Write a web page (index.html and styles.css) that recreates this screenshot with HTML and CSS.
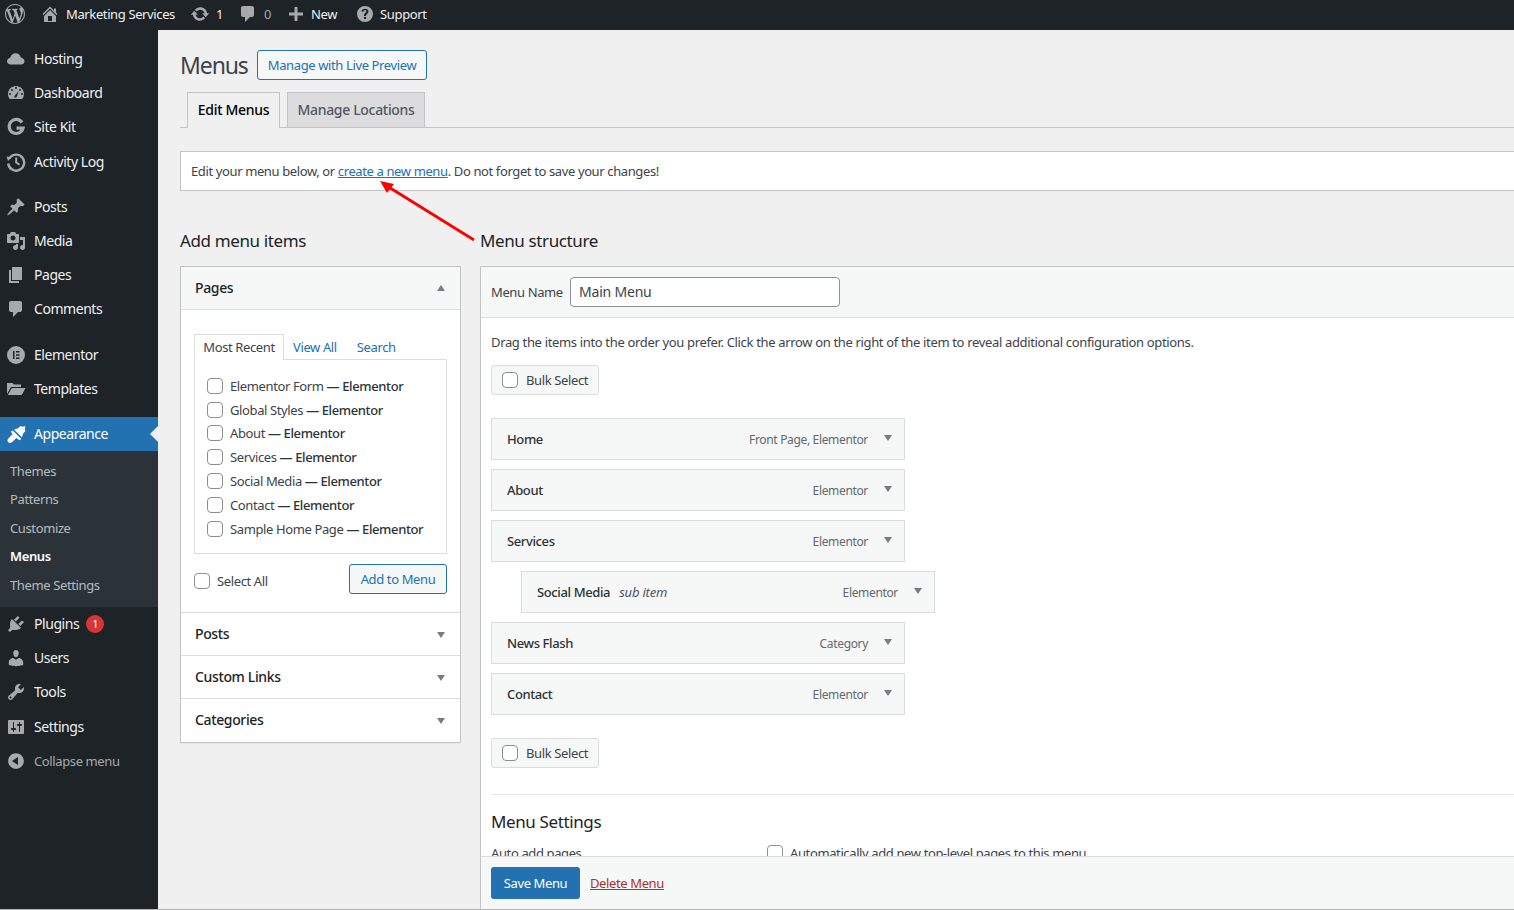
FILE: index.html
```html
<!DOCTYPE html>
<html lang="en">
<head>
  <meta charset="UTF-8">
  <title>Menus</title>
  <link rel="stylesheet" href="styles.css">
</head>
<body>
  <header class="adminbar">
    <svg class="bar-logo" viewBox="0 0 20 20"><path d="M20 10c0-5.51-4.49-10-10-10C4.48 0 0 4.49 0 10c0 5.52 4.48 10 10 10 5.51 0 10-4.48 10-10zM7.78 15.37L4.37 6.22c.55-.02 1.17-.08 1.17-.08.5-.06.44-1.13-.06-1.11 0 0-1.45.11-2.37.11-.18 0-.37 0-.58-.01C4.12 2.69 6.87 1.11 10 1.11c2.33 0 4.45.87 6.05 2.34-.68-.11-1.65.39-1.65 1.58 0 .74.45 1.36.9 2.1.35.61.55 1.36.55 2.46 0 1.49-1.4 5-1.4 5l-3.03-8.37c.54-.02.82-.17.82-.17.5-.05.44-1.25-.06-1.22 0 0-1.44.12-2.38.12-.87 0-2.33-.12-2.33-.12-.5-.03-.56 1.2-.06 1.22l.92.08 1.26 3.41zM17.41 10c.24-.64.74-1.87.43-4.25.7 1.29 1.05 2.71 1.05 4.25 0 3.29-1.73 6.24-4.4 7.78.97-2.59 1.94-5.2 2.92-7.78zM6.1 18.09C3.12 16.65 1.11 13.53 1.11 10c0-1.3.23-2.48.72-3.59C3.25 10.3 4.67 14.2 6.1 18.09zm4.03-6.63l2.58 6.98c-.86.29-1.76.45-2.71.45-.79 0-1.57-.11-2.29-.33.81-2.38 1.62-4.74 2.42-7.1z"/></svg>
    <a class="bar-item"><svg viewBox="0 0 20 20"><path d="M16 8.5l1.53 1.53-1.06 1.06L10 4.62l-6.47 6.47-1.06-1.06L10 2.5l4 4v-2h2v4zm-6-2.46l6 5.99V18H4v-5.97zM12 17v-5H8v5h4z"/></svg>Marketing Services</a>
    <a class="bar-item"><svg viewBox="0 0 20 20"><path d="M10.2 3.28c3.53 0 6.43 2.61 6.92 6h2.08l-3.5 4-3.5-4h2.32c-.45-1.97-2.21-3.45-4.32-3.45-1.45 0-2.73.71-3.54 1.78L4.95 5.66C6.23 4.2 8.11 3.28 10.2 3.28zm-.4 13.44c-3.52 0-6.43-2.61-6.92-6H.8l3.5-4c1.17 1.33 2.33 2.67 3.5 4H5.48c.45 1.97 2.21 3.45 4.32 3.45 1.45 0 2.73-.71 3.54-1.78l1.71 1.95c-1.28 1.46-3.15 2.38-5.25 2.38z"/></svg>1</a>
    <a class="bar-item bar-muted"><svg viewBox="0 0 20 20"><path d="M5 2h9c1.1 0 2 .9 2 2v7c0 1.100-.9 2-2 2h-2l-5 5v-5H5c-1.100 0-2-.9-2-2V4c0-1.100.9-2 2-2z"/></svg>0</a>
    <a class="bar-item bar-new"><svg viewBox="0 0 20 20"><path d="M17 8.500v3h-5.500V17h-3v-5.500H3v-3h5.500V3h3v5.500z"/></svg>New</a>
    <a class="bar-item bar-support"><svg viewBox="0 0 20 20"><path fill-rule="evenodd" d="M10 2a8 8 0 1 0 0 16 8 8 0 0 0 0-16zm1.100 13H9v-2h2.100zm1.400-5.500c-.6.5-1.400.9-1.400 2.500H9c0-2.300 1-3 1.700-3.500.5-.3.8-.6.8-1 0-.7-.6-1.200-1.500-1.200-.9 0-1.500.6-1.600 1.400L6.500 7.400C6.800 5.800 8.200 4.800 10 4.800c1.900 0 3.500 1.100 3.500 3 0 .8-.4 1.300-1 1.700z"/></svg>Support</a>
  </header>

  <div class="wrap">
    <nav class="sidebar">
      <ul class="menu menu-first">
        <li><svg viewBox="0 0 20 20"><path d="M14.900 8.500c1.800.2 3.600 1.700 3.600 3.700 0 2-1.600 3.300-3.500 3.300h-10C2.600 15.500 1 14.100 1 12.200 1 10.400 2.400 8.900 4.200 8.700 4.700 6 7.100 4.200 9.500 4.200c2.400 0 4.800 1.500 5.400 4.300z"/></svg>Hosting</li>
        <li><svg viewBox="0 0 20 20"><path fill-rule="evenodd" d="M3.760 16h12.480A7.960 7.960 0 0 0 18 11c0-4.420-3.580-8-8-8s-8 3.580-8 8c0 1.900.66 3.640 1.760 5zM10 4a1 1 0 1 1 0 2 1 1 0 0 1 0-2zM6 6a1 1 0 1 1 0 2 1 1 0 0 1 0-2zm8 0a1 1 0 1 1 0 2 1 1 0 0 1 0-2zM4 10a1 1 0 1 1 0 2 1 1 0 0 1 0-2zm12 0a1 1 0 1 1 0 2 1 1 0 0 1 0-2zM8.500 14.500c-.3-.9 0-1.700.6-2.300L13 8l-2.200 5.400c-.3.8-.9 1.200-1.500 1.200-.3 0-.6-.1-.8-.1z"/></svg>Dashboard</li>
        <li><svg viewBox="0 0 20 20"><path class="stroke-g" d="M16 5.500A7 7 0 1 0 17 11.200H10.500"/></svg>Site Kit</li>
        <li class="tall"><svg viewBox="0 0 20 20"><path class="stroke-clock" d="M3.300 6.500A8 8 0 1 1 2.200 11.500"/><path d="M.5 4.500l5.300.8-3.800 3.800z"/><path d="M9.200 5.500h2v4.400l3 2-1.100 1.600-3.900-2.600z"/></svg>Activity Log</li>
      </ul>
      <ul class="menu">
        <li><svg viewBox="0 0 20 20"><path d="M10.440 3.020l1.820-1.820 6.360 6.350-1.830 1.820c-1.050-.68-2.480-.57-3.410.36l-.75.75c-.92.93-1.040 2.350-.35 3.400l-1.830 1.820-2.410-2.410-2.800 2.790c-.42.42-3.380 2.710-3.800 2.290s1.860-3.390 2.280-3.810l2.790-2.790L4.100 9.360l1.830-1.820c1.050.69 2.480.57 3.400-.36l.75-.75c.93-.92 1.050-2.350.36-3.410z"/></svg>Posts</li>
        <li><svg viewBox="0 0 20 20"><path fill-rule="evenodd" d="M13 11V4c0-.55-.45-1-1-1h-1.670L9 1H5L3.670 3H2c-.55 0-1 .45-1 1v7c0 .55.45 1 1 1h10c.55 0 1-.45 1-1zM7 4.500c1.380 0 2.500 1.120 2.500 2.500S8.380 9.500 7 9.500 4.500 8.380 4.500 7 5.620 4.500 7 4.500zM14 6h5v10.500c0 1.380-1.120 2.500-2.500 2.500S14 17.880 14 16.500s1.120-2.500 2.500-2.500c.17 0 .34.020.5.050V9h-3V6zm-4 8.050V13h2v3.500c0 1.380-1.120 2.500-2.500 2.500S7 17.880 7 16.500 8.120 14 9.500 14c.17 0 .34.020.5.050z"/></svg>Media</li>
        <li><svg viewBox="0 0 20 20"><path d="M6 15V2h10v13H6zm-1 1h8v2H3V5h2v11z"/></svg>Pages</li>
        <li><svg viewBox="0 0 20 20"><path d="M5 2h9c1.100 0 2 .9 2 2v7c0 1.100-.9 2-2 2h-2l-5 5v-5H5c-1.100 0-2-.9-2-2V4c0-1.100.9-2 2-2z"/></svg>Comments</li>
      </ul>
      <ul class="menu menu-gap">
        <li><svg viewBox="0 0 20 20"><path fill-rule="evenodd" d="M10 1a9 9 0 1 0 0 18 9 9 0 0 0 0-18zM7 6h1.500v8H7zm3 0h3.500v1.500H10zm0 3.250h3.500v1.500H10zm0 3.250h3.500V14H10z"/></svg>Elementor</li>
        <li><svg viewBox="0 0 20 20"><path d="M1 4h5.500l1.500 1.500h7V8H5L1 15z"/><path d="M5.800 9H19.500l-3.700 7H1.800z"/></svg>Templates</li>
      </ul>
      <ul class="menu">
        <li class="current"><svg viewBox="0 0 20 20"><path d="M8 5.500c2.500-.5 4.500-1 6.500-3.500 1.200 1 2.600.8 5 0-.7 2.400-1 3.800 0 5-2.500 2-3 4-3.500 6.500z"/><path d="M6.800 6.500l8.500 8.500-1.800 1.200-3.200-2.200-4.300 4.200c-1.100 1-2.800 1-3.800.1-1-1-1-2.700.1-3.800l4.300-4.300-1.800-2.700z"/></svg>Appearance</li>
      </ul>
      <ul class="submenu">
        <li>Themes</li>
        <li>Patterns</li>
        <li>Customize</li>
        <li class="sub-current">Menus</li>
        <li>Theme Settings</li>
      </ul>
      <ul class="menu">
        <li><svg viewBox="0 0 20 20"><path d="M13.110 4.360L9.870 7.600 8 5.730l3.240-3.240c.35-.34 1.050-.2 1.560.32.52.51.66 1.210.31 1.550zm-8 1.770l.91-1.120 9.010 9.010-1.190.84c-.71.71-2.630 1.160-3.820 1.160H6.140L4.900 17.260c-.59.59-1.540.59-2.120 0-.59-.58-.59-1.530 0-2.120l1.240-1.240v-3.880c0-1.130.4-3.190 1.090-3.890zm7.260 3.970l3.240-3.240c.34-.35 1.040-.21 1.550.31.52.51.66 1.210.31 1.550l-3.240 3.250z"/></svg>Plugins<span class="badge">1</span></li>
        <li><svg viewBox="0 0 20 20"><path d="M10 9.250c-2.270 0-2.730-3.440-2.730-3.440C7 4.020 7.820 2 9.970 2c2.160 0 2.980 2.020 2.710 3.810 0 0-.41 3.440-2.680 3.440zm0 2.570L12.720 10c2.390 0 4.520 2.330 4.520 4.530v2.490s-3.650 1.130-7.240 1.130c-3.650 0-7.240-1.130-7.240-1.130v-2.490c0-2.250 1.940-4.480 4.430-4.480z"/></svg>Users</li>
        <li><svg viewBox="0 0 20 20"><path fill-rule="evenodd" d="M16.680 9.770c-1.340 1.340-3.300 1.670-4.950.99l-5.410 6.520c-.99.99-2.590.99-3.570 0-.99-.98-.99-2.580 0-3.570l6.520-5.420c-.68-1.650-.35-3.610.99-4.950 1.280-1.280 3.120-1.620 4.720-1.060l-2.890 2.890 2.820 2.820 2.860-2.870c.53 1.580.18 3.390-1.090 4.650zM3.810 16.210c.4.39 1.030.39 1.420 0 .4-.4.4-1.030 0-1.430-.39-.39-1.020-.39-1.420 0-.39.4-.39 1.030 0 1.430z"/></svg>Tools</li>
        <li class="tall"><svg viewBox="0 0 20 20"><path fill-rule="evenodd" d="M18 16V4c0-.55-.45-1-1-1H3c-.55 0-1 .45-1 1v12c0 .55.45 1 1 1h14c.55 0 1-.45 1-1zM8 11h1c.55 0 1 .45 1 1s-.45 1-1 1H8v1.500c0 .28-.22.5-.5.5s-.5-.22-.5-.5V13H6c-.55 0-1-.45-1-1s.45-1 1-1h1V5.500c0-.28.22-.5.5-.5s.5.22.5.5V11zm5-2h-1c-.55 0-1-.45-1-1s.45-1 1-1h1V5.500c0-.28.22-.5.5-.5s.5.22.5.5V7h1c.55 0 1 .45 1 1s-.45 1-1 1h-1v5.500c0 .28-.22.5-.5.5s-.5-.22-.5-.5V9z"/></svg>Settings</li>
        <li class="collapse"><svg viewBox="0 0 20 20"><path fill-rule="evenodd" d="M10 2.160c4.330 0 7.840 3.510 7.840 7.840s-3.510 7.840-7.840 7.840S2.160 14.330 2.160 10 5.670 2.160 10 2.160zM12 14V6l-6 4z"/></svg>Collapse menu</li>
      </ul>
    </nav>

    <main class="content">
      <div class="title-row">
        <h1>Menus</h1>
        <a class="btn-outline live-btn">Manage with Live Preview</a>
      </div>

      <div class="tabs">
        <a class="tab tab-active">Edit Menus</a>
        <a class="tab">Manage Locations</a>
      </div>

      <div class="notice">Edit your menu below, or <a class="link">create a new menu</a>. Do not forget to save your changes!</div>

      <div class="columns">
        <section class="col-left">
          <h2>Add menu items</h2>
          <div class="accordion">
            <div class="acc-head acc-open"><span>Pages</span><i class="tri tri-up"></i></div>
            <div class="acc-body">
              <div class="inner-tabs">
                <span class="inner-tab inner-active">Most Recent</span>
                <a class="inner-link">View All</a>
                <a class="inner-link">Search</a>
              </div>
              <div class="page-list">
                <label class="page-item"><input type="checkbox" class="check">Elementor Form <b>— Elementor</b></label>
                <label class="page-item"><input type="checkbox" class="check">Global Styles <b>— Elementor</b></label>
                <label class="page-item"><input type="checkbox" class="check">About <b>— Elementor</b></label>
                <label class="page-item"><input type="checkbox" class="check">Services <b>— Elementor</b></label>
                <label class="page-item"><input type="checkbox" class="check">Social Media <b>— Elementor</b></label>
                <label class="page-item"><input type="checkbox" class="check">Contact <b>— Elementor</b></label>
                <label class="page-item"><input type="checkbox" class="check">Sample Home Page <b>— Elementor</b></label>
              </div>
              <div class="add-row">
                <label class="select-all"><input type="checkbox" class="check">Select All</label>
                <a class="btn-outline add-btn">Add to Menu</a>
              </div>
            </div>
            <div class="acc-head"><span>Posts</span><i class="tri"></i></div>
            <div class="acc-head"><span>Custom Links</span><i class="tri"></i></div>
            <div class="acc-head"><span>Categories</span><i class="tri"></i></div>
          </div>
        </section>

        <section class="col-right">
          <h2>Menu structure</h2>
          <div class="panel">
            <div class="panel-head">
              <span class="name-label">Menu Name</span>
              <input class="name-input" type="text" value="Main Menu">
            </div>
            <div class="panel-body">
              <p class="hint">Drag the items into the order you prefer. Click the arrow on the right of the item to reveal additional configuration options.</p>
              <label class="bulk"><input type="checkbox" class="check">Bulk Select</label>
              <ul class="items">
                <li class="item"><span class="item-title">Home</span><span class="item-type">Front Page, Elementor</span><i class="tri"></i></li>
                <li class="item"><span class="item-title">About</span><span class="item-type">Elementor</span><i class="tri"></i></li>
                <li class="item"><span class="item-title">Services</span><span class="item-type">Elementor</span><i class="tri"></i></li>
                <li class="item item-sub"><span class="item-title">Social Media</span><em>sub item</em><span class="item-type">Elementor</span><i class="tri"></i></li>
                <li class="item"><span class="item-title">News Flash</span><span class="item-type">Category</span><i class="tri"></i></li>
                <li class="item"><span class="item-title">Contact</span><span class="item-type">Elementor</span><i class="tri"></i></li>
              </ul>
              <label class="bulk"><input type="checkbox" class="check">Bulk Select</label>
              <div class="settings">
                <h3>Menu Settings</h3>
                <div class="setting-row">
                  <span class="setting-name">Auto add pages</span>
                  <label class="setting-opt"><input type="checkbox" class="check">Automatically add new top-level pages to this menu</label>
                </div>
              </div>
            </div>
            <div class="panel-foot">
              <a class="btn-primary">Save Menu</a>
              <a class="delete">Delete Menu</a>
            </div>
          </div>
        </section>
      </div>

      <svg class="arrow" viewBox="0 0 100 64"><path d="M95 60L8 6" stroke="#f00" stroke-width="2.800" fill="none"/><path d="M1 1l14 3-7 9z" fill="#f00"/></svg>
    </main>
  </div>
</body>
</html>
```

FILE: styles.css
```css
/* page */
* {
  box-sizing: border-box;
}

html, body {
  height: 100%;
}

body {
  margin: 0;
  overflow: hidden;
  background-color: #f0f0f0;
  color: #3c434a;
  font-family: "Noto Sans", "Open Sans", sans-serif;
  font-size: 13px;
  letter-spacing: -0.38px;
}

ul {
  list-style: none;
  margin: 0;
  padding: 0;
}

/* top bar */
.adminbar {
  display: flex;
  align-items: center;
  height: 30px;
  padding-bottom: 2px;
  background-color: #1d2327;
  color: #f0f0f1;
}

.adminbar svg {
  fill: #a7aaad;
}

.bar-logo {
  width: 20px;
  height: 20px;
  margin-left: 5px;
}

.bar-item {
  display: flex;
  align-items: center;
  gap: 6px;
  margin-left: 15px;
}

.bar-item svg {
  width: 20px;
  height: 20px;
}

.bar-muted {
  color: #a7aaad;
}

.bar-new {
  gap: 5px;
}

.bar-support {
  margin-left: 18px;
  gap: 5px;
}

/* left menu */
.wrap {
  display: flex;
  height: 880px;
  border-bottom: 1px solid #b4b5b7;
}

.sidebar {
  flex: 0 0 158px;
  background-color: #1d2327;
  color: #f0f0f1;
  font-size: 14px;
  letter-spacing: -0.45px;
}

.menu li {
  display: flex;
  align-items: center;
  height: 34px;
  padding-left: 6px;
  line-height: 18px;
}

.menu li.tall {
  height: 35px;
  padding-top: 1px;
}

.menu li svg {
  width: 20px;
  height: 20px;
  margin-right: 8px;
  fill: #a7aaad;
}

.menu-first {
  margin-top: 12px;
  margin-bottom: 11px;
}

.menu-gap {
  margin-top: 12px;
  margin-bottom: 11px;
}

.stroke-g {
  fill: none;
  stroke: #a7aaad;
  stroke-width: 3.2;
}

.stroke-clock {
  fill: none;
  stroke: #a7aaad;
  stroke-width: 2.4;
}

.menu li.current {
  position: relative;
  background-color: #2271b1;
  color: #fff;
}

.menu li.current svg {
  fill: #fff;
}

.menu li.current::after {
  content: "";
  position: absolute;
  right: 0;
  top: 9px;
  border: 8px solid transparent;
  border-right-color: #f0f0f1;
  border-left-width: 0;
}

.submenu {
  padding: 7px 0;
  background-color: #2c3338;
  color: rgba(240, 246, 252, 0.7);
  font-size: 13px;
  letter-spacing: -0.38px;
}

.submenu li {
  height: 28.4px;
  padding-left: 10px;
  line-height: 27px;
}

.submenu .sub-current {
  color: #fff;
  font-weight: 600;
}

.badge {
  display: inline-flex;
  justify-content: center;
  align-items: center;
  width: 18px;
  height: 18px;
  margin-left: 7px;
  border-radius: 50%;
  background-color: #d63638;
  color: #fff;
  font-size: 11px;
}

.menu li.collapse {
  color: #a7aaad;
  font-size: 13px;
  letter-spacing: -0.38px;
}

/* content */
.content {
  position: relative;
  flex: 1;
  min-width: 0;
  padding-left: 22px;
  overflow: hidden;
}

.title-row {
  display: flex;
  align-items: center;
  gap: 8px;
  height: 30px;
  margin-top: 20px;
}

h1 {
  width: 69px;
  margin: 0;
  padding-bottom: 1px;
  color: #3c434a;
  font-size: 23px;
  font-weight: 400;
  letter-spacing: -1.1px;
}

.btn-outline {
  display: flex;
  align-items: center;
  justify-content: center;
  border: 1px solid #2271b1;
  border-radius: 3px;
  background-color: #f6f7f7;
  color: #2271b1;
}

.live-btn {
  width: 170px;
  height: 30px;
}

.tabs {
  display: flex;
  gap: 7px;
  width: 1400px;
  height: 36px;
  margin-top: 12px;
  padding-left: 7px;
  border-bottom: 1px solid #c3c4c7;
}

.tab {
  display: flex;
  align-items: center;
  justify-content: center;
  width: 138px;
  height: 35px;
  padding-bottom: 2px;
  border: 1px solid #c3c4c7;
  border-bottom: 0;
  background-color: #dcdcde;
  color: #50575e;
  font-size: 14px;
  font-weight: 500;
  letter-spacing: -0.32px;
}

.tab-active {
  width: 93px;
  height: 36px;
  background-color: #f0f0f0;
  color: #000;
}

.notice {
  display: flex;
  align-items: center;
  white-space: pre;
  width: 1400px;
  height: 40px;
  margin-top: 23px;
  padding-left: 10px;
  border: 1px solid #c3c4c7;
  background-color: #fff;
}

.link {
  color: #2271b1;
  text-decoration: underline;
}

.columns {
  display: flex;
  gap: 19px;
  width: 1400px;
  margin-top: 39px;
}

h2 {
  margin: 0;
  height: 36px;
  color: #1d2327;
  font-size: 17px;
  font-weight: 400;
  line-height: 22px;
  letter-spacing: -0.38px;
}

.col-left {
  flex: 0 0 281px;
}

.col-right {
  flex: 1;
}

/* add items box */
.accordion {
  padding-bottom: 1px;
  border: 1px solid #c3c4c7;
  box-shadow: 0 1px 1px rgba(0, 0, 0, 0.04);
  background-color: #fff;
}

.acc-head {
  display: flex;
  justify-content: space-between;
  align-items: center;
  height: 43px;
  padding: 0 15px 2px 14px;
  border-top: 1px solid #dcdcde;
  color: #1d2327;
  font-size: 14px;
  font-weight: 500;
  letter-spacing: -0.36px;
}

.acc-open {
  border-top: 0;
  border-bottom: 1px solid #dcdcde;
  background-color: #f6f7f7;
}

.tri {
  display: block;
  flex: none;
  width: 0;
  height: 0;
  border-left: 4px solid transparent;
  border-right: 4px solid transparent;
  border-top: 6px solid #787c82;
}

.acc-head .tri {
  margin-top: 4px;
}

.acc-head .tri-up {
  margin-top: 2px;
  border-top: 0;
  border-bottom: 6px solid #787c82;
}

.acc-body {
  padding: 24px 13px 18px;
}

.inner-tabs {
  display: flex;
  align-items: center;
  height: 25px;
}

.inner-tab {
  position: relative;
  display: flex;
  align-items: center;
  justify-content: center;
  width: 90px;
  height: 26px;
  margin-bottom: -1px;
  padding-bottom: 2px;
  border: 1px solid #dcdcde;
  border-bottom: 0;
  background-color: #fff;
}

.inner-link {
  margin-left: 9px;
  color: #2271b1;
}

.inner-link + .inner-link {
  margin-left: 20px;
}

.page-list {
  height: 195px;
  padding: 14px 0 0 12px;
  border: 1px solid #dcdcde;
}

.page-item {
  display: flex;
  align-items: center;
  height: 23.8px;
  white-space: pre;
}

.page-item b {
  color: #2c3338;
  font-weight: 500;
}

.check {
  appearance: none;
  flex: none;
  width: 16px;
  height: 16px;
  margin: 0 7px 0 0;
  border: 1px solid #8c8f94;
  border-radius: 4px;
  background-color: #fff;
}

.add-row {
  display: flex;
  justify-content: space-between;
  align-items: center;
  height: 30px;
  margin-top: 10px;
}

.select-all {
  display: flex;
  align-items: center;
  margin-top: 4px;
}

.add-btn {
  width: 98px;
  height: 30px;
}

/* menu structure box */
.panel {
  display: flex;
  flex-direction: column;
  height: 643px;
  border: 1px solid #c3c4c7;
  border-right: 0;
  border-bottom: 0;
  background-color: #fff;
}

.panel-head {
  display: flex;
  align-items: center;
  gap: 7px;
  flex: none;
  height: 51px;
  padding-left: 10px;
  border-bottom: 1px solid #dcdcde;
  background-color: #f6f7f7;
}

.name-label {
  width: 72px;
}

.name-input {
  width: 270px;
  height: 30px;
  padding: 0 8px 2px;
  border: 1px solid #8c8f94;
  border-radius: 4px;
  background-color: #fff;
  color: #3c434a;
  font-family: inherit;
  font-size: 14px;
  letter-spacing: -0.2px;
}

.panel-body {
  flex: 1;
  min-height: 0;
  padding: 0 0 0 10px;
  overflow: hidden;
}

.hint {
  margin: 15px 0 14px;
  line-height: 18px;
  letter-spacing: -0.34px;
}

.bulk {
  display: flex;
  align-items: center;
  width: 108px;
  height: 30px;
  padding-left: 10px;
  border: 1px solid #dcdcde;
  border-radius: 3px;
  background-color: #f6f7f7;
}

.bulk .check {
  margin-right: 8px;
}

.items {
  margin: 23px 0 23px;
}

.item {
  display: flex;
  align-items: center;
  width: 414px;
  height: 42px;
  margin-bottom: 9px;
  padding: 0 12px 0 15px;
  border: 1px solid #dcdcde;
  background-color: #f6f7f7;
}

.item:last-child {
  margin-bottom: 0;
}

.item .tri {
  margin-top: -3px;
}

.item-sub {
  margin-left: 30px;
}

.item-title {
  color: #2c3338;
  font-weight: 500;
}

.item em {
  margin-left: 9px;
  color: #50575e;
  font-size: 13px;
  letter-spacing: -0.2px;
}

.item-type {
  margin-left: auto;
  margin-right: 16px;
  color: #646970;
  font-size: 12px;
  letter-spacing: -0.34px;
}

.settings {
  margin-top: 26px;
  padding-top: 14px;
  border-top: 1px solid #e5e5e5;
}

h3 {
  margin: 0 0 9px;
  color: #1d2327;
  font-size: 17px;
  font-weight: 400;
  line-height: 26px;
  letter-spacing: -0.38px;
}

.setting-row {
  display: flex;
  align-items: center;
}

.setting-name {
  width: 276px;
}

.setting-opt {
  display: flex;
  align-items: center;
}

.panel-foot {
  display: flex;
  align-items: center;
  gap: 10px;
  flex: none;
  height: 53px;
  padding-left: 10px;
  border-top: 1px solid #dcdcde;
  background-color: #f6f7f7;
}

.btn-primary {
  display: flex;
  align-items: center;
  justify-content: center;
  width: 89px;
  height: 32px;
  border-radius: 3px;
  background-color: #2271b1;
  color: #fff;
}

.delete {
  color: #b32d2e;
  text-decoration: underline;
}

/* red pointer drawn over the page */
.arrow {
  position: absolute;
  left: 221px;
  top: 150px;
  width: 100px;
  height: 64px;
}
```
